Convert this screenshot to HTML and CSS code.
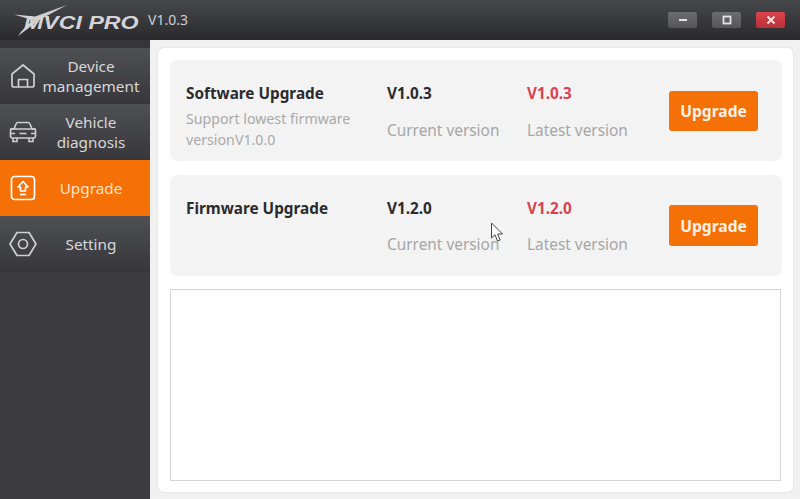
FILE: index.html
```html
<!DOCTYPE html>
<html lang="en">
<head>
<meta charset="utf-8">
<title>MVCI PRO</title>
<link rel="stylesheet" href="styles.css">
</head>
<body>
<div class="app">
  <header class="titlebar">
    <div class="logo">
      <svg class="logo-mark" width="70" height="36" viewBox="0 0 70 36"><path d="M1 10.5 L22 12.5 L54 1 L27 15.5 L21 16.5 Z M21 15.5 L25 17 L5 32 Q11 23 21 15.5 Z" fill="#cfcfd1"/></svg>
      <span class="logo-text">MVCI PRO</span>
    </div>
    <span class="version">V1.0.3</span>
    <div class="win-btns">
      <div class="win-btn"><svg width="10" height="8" viewBox="0 0 10 8"><rect x="1" y="3" width="8" height="2" fill="#e4e4e4"/></svg></div>
      <div class="win-btn"><svg width="10" height="10" viewBox="0 0 10 10"><rect x="1.5" y="1.5" width="7" height="7" fill="none" stroke="#e4e4e4" stroke-width="1.8"/></svg></div>
      <div class="win-btn win-close"><svg width="10" height="10" viewBox="0 0 10 10"><path d="M1.5 1.5 L8.5 8.5 M8.5 1.5 L1.5 8.5" stroke="#f3e3e3" stroke-width="2"/></svg></div>
    </div>
  </header>
  <div class="body">
    <nav class="sidebar">
      <div class="nav-item">
        <svg class="nav-icon" width="28" height="26" viewBox="0 0 28 26" fill="none" stroke="#cfcfcf" stroke-width="1.7"><path d="M3 11 L14 2 L25 11 V22 Q25 24 23 24 H5 Q3 24 3 22 Z" stroke-linejoin="round"/><path d="M9.5 24 V16.5 H18.5 V24"/></svg>
        <span class="nav-label">Device<br>management</span>
      </div>
      <div class="nav-item">
        <svg class="nav-icon" width="28" height="22" viewBox="0 0 28 22" fill="none" stroke="#cfcfcf" stroke-width="1.6"><path d="M5 8 L7 3 Q7.5 1.5 9 1.5 H19 Q20.5 1.5 21 3 L23 8"/><path d="M1 8 H5 M23 8 H27"/><rect x="1.5" y="8" width="25" height="9" rx="2"/><path d="M1.5 12.5 H6 M22 12.5 H26.5 M10.5 12.5 H17.5 M4 17 V20.5 H8 V17 M20 17 V20.5 H24 V17"/></svg>
        <span class="nav-label">Vehicle<br>diagnosis</span>
      </div>
      <div class="nav-item active">
        <svg class="nav-icon" width="28" height="26" viewBox="0 0 28 26" fill="none" stroke="#fff" stroke-width="1.7"><rect x="2.5" y="1.5" width="23" height="23" rx="3"/><path d="M14 6.5 L19 12 H16.5 V16 H11.5 V12 H9 Z" stroke-linejoin="round"/><path d="M11 19.5 H17"/></svg>
        <span class="nav-label">Upgrade</span>
      </div>
      <div class="nav-item">
        <svg class="nav-icon" width="28" height="26" viewBox="0 0 28 26" fill="none" stroke="#cfcfcf" stroke-width="1.7"><path d="M8 1.5 H20 L27 13 L20 24.5 H8 L1 13 Z" stroke-linejoin="round"/><circle cx="14" cy="13" r="4.5"/></svg>
        <span class="nav-label">Setting</span>
      </div>
    </nav>
    <main class="content">
      <div class="panel">
        <section class="card">
          <div class="col-name">
            <div class="card-title">Software Upgrade</div>
            <div class="card-note">Support lowest firmware<br>versionV1.0.0</div>
          </div>
          <div class="col-ver">
            <div class="ver">V1.0.3</div>
            <div class="ver-label">Current version</div>
          </div>
          <div class="col-ver col-latest">
            <div class="ver ver-red">V1.0.3</div>
            <div class="ver-label">Latest version</div>
          </div>
          <button class="upgrade">Upgrade</button>
        </section>
        <section class="card card-fw">
          <div class="col-name">
            <div class="card-title">Firmware Upgrade</div>
          </div>
          <div class="col-ver">
            <div class="ver">V1.2.0</div>
            <div class="ver-label">Current version</div>
          </div>
          <div class="col-ver col-latest">
            <div class="ver ver-red">V1.2.0</div>
            <div class="ver-label">Latest version</div>
          </div>
          <button class="upgrade">Upgrade</button>
        </section>
        <div class="log"></div>
      </div>
    </main>
  </div>
  <svg class="cursor" width="14" height="21" viewBox="0 0 14 21"><path d="M1.5 1 V16 L5 12.8 L7.6 19 L10.2 18 L7.6 12 H12.5 Z" fill="#fff" stroke="#444" stroke-width="1"/></svg>
</div>
</body>
</html>
```

FILE: styles.css
```css
* { box-sizing: border-box; }
html, body { margin: 0; padding: 0; }
body { width: 800px; height: 499px; overflow: hidden; font-family: "Noto Sans", "Open Sans", sans-serif; }
.app { position: relative; width: 800px; height: 499px; display: flex; flex-direction: column; background: #f1f1f2; }

.titlebar { height: 40px; flex: none; display: flex; align-items: center; background: linear-gradient(#47484c, #2a2a2d); color: #d6d6d8; }
.logo { position: relative; width: 148px; height: 40px; flex: none; }
.logo-mark { position: absolute; left: 13px; top: 4px; }
.logo-text { position: absolute; left: 24px; top: 12px; font-family: "Liberation Sans", sans-serif; font-style: italic; font-weight: 700; font-size: 19px; line-height: 22px; color: #d5d5d7; white-space: nowrap; transform-origin: left center; transform: scaleX(1.22); }
.version { font-size: 14px; color: #cfcfd1; line-height: 20px; margin-top: -1px; }
.win-btns { margin-left: auto; display: flex; gap: 15px; padding-right: 15px; margin-top: -1px; }
.win-btn { width: 29px; height: 16px; border-radius: 2px; background: linear-gradient(#6c6c6e, #56565a); display: flex; align-items: center; justify-content: center; }
.win-close { background: linear-gradient(#dc444e, #b93039); }

.body { flex: 1; display: flex; min-height: 0; }
.sidebar { width: 150px; flex: none; display: flex; flex-direction: column; border-top: 8px solid #35353a; background: #3c3c40; }
.nav-item { height: 56px; flex: none; display: flex; align-items: center; padding: 0 5px 0 9px; background: linear-gradient(#4f5054, #37373b); color: #d8d8d8; }
.nav-item.active { background: #f57006; color: #fde3c8; }
.nav-icon { flex: none; }
.nav-label { flex: 1; text-align: center; font-size: 15.3px; line-height: 20px; }

.content { flex: 1; padding: 8px 7px 7px 8px; min-width: 0; }
.panel { height: 100%; background: #fff; border-radius: 6px; box-shadow: 0 0 2px #d4d4d4; padding: 12px 11px 11px 12px; display: flex; flex-direction: column; gap: 14px; }
.card { height: 101px; flex: none; background: #f3f3f3; border-radius: 8px; display: flex; align-items: flex-start; position: relative; padding: 23px 0 0 16px; }
.col-name { width: 201px; flex: none; }
.card-title { font-size: 15.3px; font-weight: 700; line-height: 20px; color: #2b2b2d; }
.card-note { margin-top: 5px; font-size: 14.2px; line-height: 21px; color: #a9a9a9; }
.col-ver { width: 140px; flex: none; }
.ver { font-size: 15.3px; font-weight: 700; line-height: 20px; color: #2b2b2d; }
.ver-red { color: #d8434f; }
.ver-label { margin-top: 18px; font-size: 15.4px; line-height: 20px; color: #a6a6a6; white-space: nowrap; }
.card-fw .ver-label { margin-top: 17px; }
.upgrade { position: absolute; left: 499px; top: 31px; width: 89px; height: 40px; border: 0; border-radius: 3px; background: #f57006; color: #fdf1e4; font-family: inherit; font-size: 15.6px; font-weight: 700; padding: 0; }
.card-fw .upgrade { top: 30px; height: 41px; }
.log { flex: 1; background: #fff; border: 1px solid #d4d4d4; margin-top: -1px; margin-right: 1px; }
.cursor { position: absolute; left: 490px; top: 222px; }
```
